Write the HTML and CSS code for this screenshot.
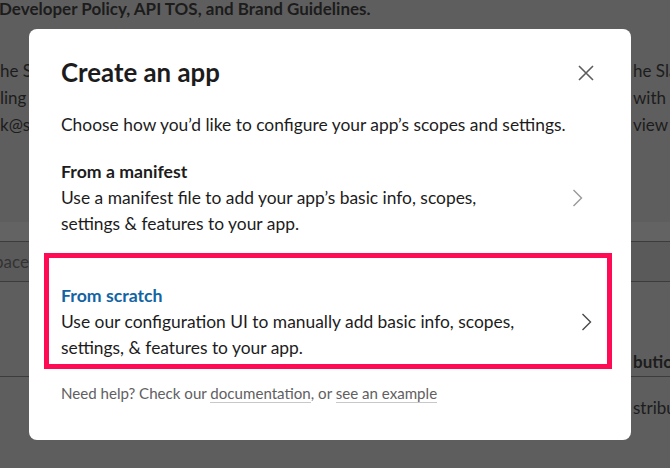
FILE: index.html
```html
<!DOCTYPE html>
<html lang="en">
<head>
<meta charset="utf-8">
<title>Create an app</title>
<link rel="stylesheet" href="styles.css">
</head>
<body>
<div class="page">
  <p class="page-top">Developer Policy, API TOS, and Brand Guidelines.</p>
  <div class="page-cols">
    <div class="page-col page-col--left">
      <p>he Slack</p>
      <p>ling your</p>
      <p>k@slack</p>
    </div>
    <div class="page-col page-col--right">
      <p>he Slack</p>
      <p>with the</p>
      <p>view p</p>
    </div>
  </div>
  <div class="page-band"></div>
  <div class="page-row page-row--input"><span class="ph">pace</span></div>
  <div class="page-row page-row--tall"><span class="strong">bution</span></div>
  <div class="page-row page-row--tall2"><span>stribute</span></div>
</div>

<div class="modal" role="dialog" aria-labelledby="modal-title">
  <div class="modal-head">
    <h1 id="modal-title" class="modal-title">Create an app</h1>
    <button class="close" aria-label="Close">
      <svg width="16" height="16" viewBox="0 0 16 16" aria-hidden="true"><path d="M1 1L15 15M15 1L1 15" stroke="#5e5d5e" stroke-width="1.6" fill="none"/></svg>
    </button>
  </div>
  <p class="modal-intro">Choose how you’d like to configure your app’s scopes and settings.</p>
  <div class="option">
    <div class="option-text">
      <div class="option-title">From a manifest</div>
      <div class="option-desc">Use a manifest file to add your app’s basic info, scopes,<br>settings &amp; features to your app.</div>
    </div>
    <svg class="chev" width="11" height="18" viewBox="0 0 11 18" aria-hidden="true"><path d="M1.5 1L9.5 9L1.5 17" stroke="#9a999a" stroke-width="1.4" fill="none"/></svg>
  </div>
  <div class="option option--active">
    <div class="option-text">
      <div class="option-title">From scratch</div>
      <div class="option-desc">Use our configuration UI to manually add basic info, scopes,<br>settings, &amp; features to your app.</div>
    </div>
    <svg class="chev" width="11" height="18" viewBox="0 0 11 18" aria-hidden="true"><path d="M1.5 1L9.5 9L1.5 17" stroke="#4a494a" stroke-width="1.4" fill="none"/></svg>
  </div>
  <p class="modal-foot">Need help? Check our <a href="#">documentation</a>, or <a href="#">see an example</a></p>
</div>
</body>
</html>
```
FILE: styles.css
```css
* { box-sizing: border-box; }
html, body {
  margin: 0;
  padding: 0;
}
body {
  width: 670px;
  height: 468px;
  overflow: hidden;
  position: relative;
  background: #5e5e5e;
  font-family: Lato, "Open Sans", sans-serif;
  color: #1a1a1a;
}
p { margin: 0; }

.page-top {
  font-size: 17px;
  font-weight: 700;
  line-height: 16px;
  color: #1c1c1c;
  padding-top: 1px;
  margin-left: -1px;
  white-space: nowrap;
}
.page-cols {
  display: flex;
  justify-content: space-between;
  margin-top: 40px;
}
.page-col p {
  font-size: 17px;
  line-height: 27px;
  color: #1c1c1c;
  white-space: nowrap;
  overflow: hidden;
}
.page-col--left { width: 29px; overflow: hidden; }
.page-col--right { width: 37px; overflow: hidden; }
.page-band {
  margin-top: 84px;
  height: 20px;
  background: #636363;
  border-bottom: 1px solid #3c3c3c;
}
.page-row {
  display: flex;
  justify-content: space-between;
  border-bottom: 1px solid #3c3c3c;
  font-size: 17px;
  color: #1c1c1c;
}
.page-row--input {
  height: 40px;
  align-items: center;
  background: #5a5a5a;
}
.page-row--input .ph { color: #333; margin-left: -6px; }
.page-row--tall {
  height: 95px;
  align-items: flex-end;
  justify-content: flex-end;
  padding-bottom: 4px;
}
.page-row--tall .strong { font-weight: 700; width: 37px; overflow: hidden; white-space: nowrap; }
.page-row--tall2 {
  height: 95px;
  justify-content: flex-end;
  padding-top: 20px;
}
.page-row--tall2 span { width: 37px; overflow: hidden; white-space: nowrap; }

.modal {
  position: absolute;
  left: 29px;
  top: 29px;
  width: 602px;
  height: 411px;
  background: #fff;
  border-radius: 8px;
  padding: 28px 32px 0 32px;
  color: #1d1c1d;
}
.modal-head {
  display: flex;
  justify-content: space-between;
  align-items: center;
}
.modal-title {
  margin: 0;
  font-size: 25.8px;
  line-height: 30px;
  font-weight: 700;
}
.close {
  border: 0;
  background: none;
  padding: 0;
  width: 16px;
  height: 16px;
  margin-right: 5px;
  margin-top: 2px;
  display: flex;
}
.modal-intro {
  margin-top: 25px;
  font-size: 17.4px;
  line-height: 26px;
  white-space: nowrap;
}
.option {
  position: relative;
  display: flex;
  align-items: center;
  justify-content: space-between;
  margin-top: 21px;
}
.option + .option { margin-top: 46px; }
.option-title {
  font-size: 17.7px;
  font-weight: 700;
  line-height: 26px;
}
.option-desc {
  font-size: 17.4px;
  line-height: 26px;
  white-space: nowrap;
}
.chev { margin-right: 16px; flex: none; }
.option--active .chev { margin-right: 7px; }
.option--active .option-title { color: #1264a3; }
.option--active::after {
  content: "";
  position: absolute;
  left: -17px;
  right: -13px;
  top: -30px;
  bottom: -8px;
  border: 5px solid #ff0a54;
  pointer-events: none;
}
.modal-foot {
  margin-top: 22px;
  font-size: 15.1px;
  line-height: 20px;
  color: #616061;
  white-space: nowrap;
}
.modal-foot a {
  color: #616061;
  text-decoration: none;
  border-bottom: 1px solid #c8c8c8;
}
```
